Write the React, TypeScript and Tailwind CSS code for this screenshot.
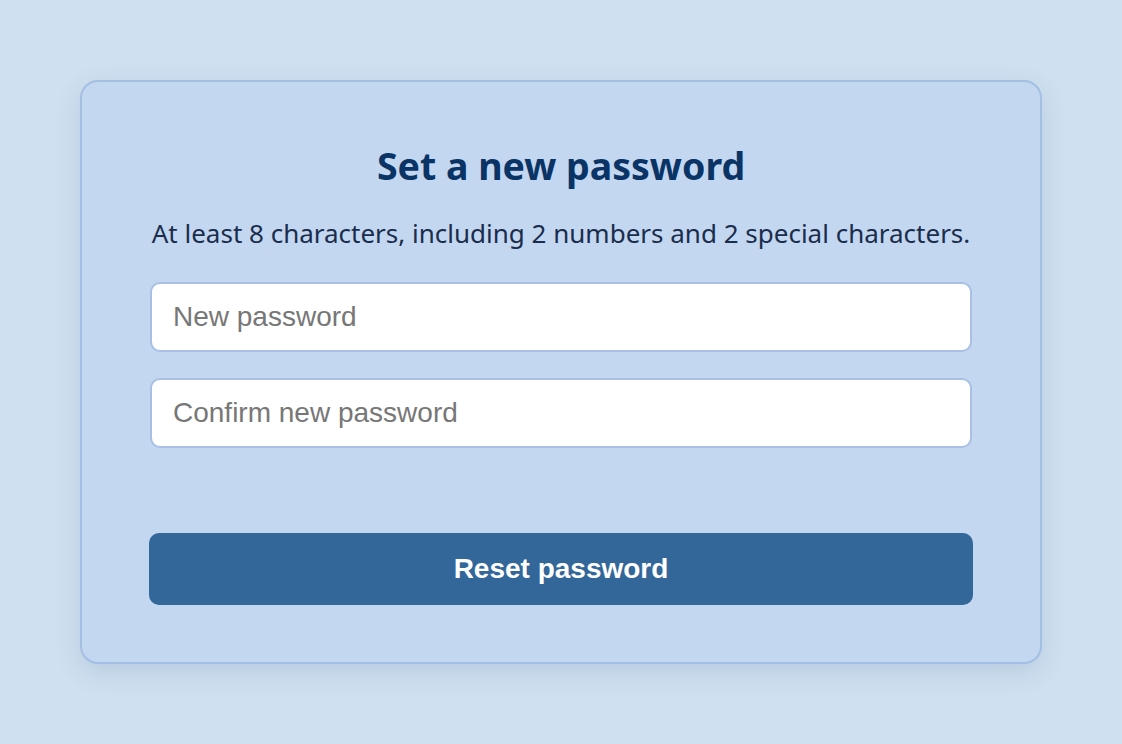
import React from "react";

export default function App() {
  return (
    <div className="flex h-screen w-full items-center justify-center bg-[#cfe0f0]">
      <div className="flex w-[962px] flex-col rounded-[18px] border-2 border-[#a3bfe3] bg-[#c3d7f0] px-[68px] pb-[57px] pt-[62px] shadow-[0_8px_24px_rgba(80,110,150,0.18)]">
        <h1 className="h-[44px] text-center text-[37.5px] font-bold leading-[44px] text-[#0a3366] [font-family:'Noto_Sans',sans-serif]">
          Set a new password
        </h1>
        <p className="mt-[28px] h-[34px] text-center text-[26px] leading-[34px] text-[#1a2d4c] [font-family:'Noto_Sans',sans-serif]">
          At least 8 characters, including 2 numbers and 2 special characters.
        </p>
        <div className="mt-[32px] flex flex-col gap-[26px]">
          <input
            type="password"
            placeholder="New password"
            className="h-[70px] w-full rounded-[10px] border-2 border-[#a9c0e4] bg-white px-[21px] text-[28px] text-[#333] outline-none placeholder:text-[#777] [font-family:'Liberation_Sans',Arial,sans-serif]"
          />
          <input
            type="password"
            placeholder="Confirm new password"
            className="h-[70px] w-full rounded-[10px] border-2 border-[#a9c0e4] bg-white px-[21px] text-[28px] text-[#333] outline-none placeholder:text-[#777] [font-family:'Liberation_Sans',Arial,sans-serif]"
          />
        </div>
        <button className="mt-[85px] -mx-px h-[72px] rounded-[10px] bg-[#336699] text-[28px] font-bold text-white [font-family:'Liberation_Sans',Arial,sans-serif]">
          Reset password
        </button>
      </div>
    </div>
  );
}
